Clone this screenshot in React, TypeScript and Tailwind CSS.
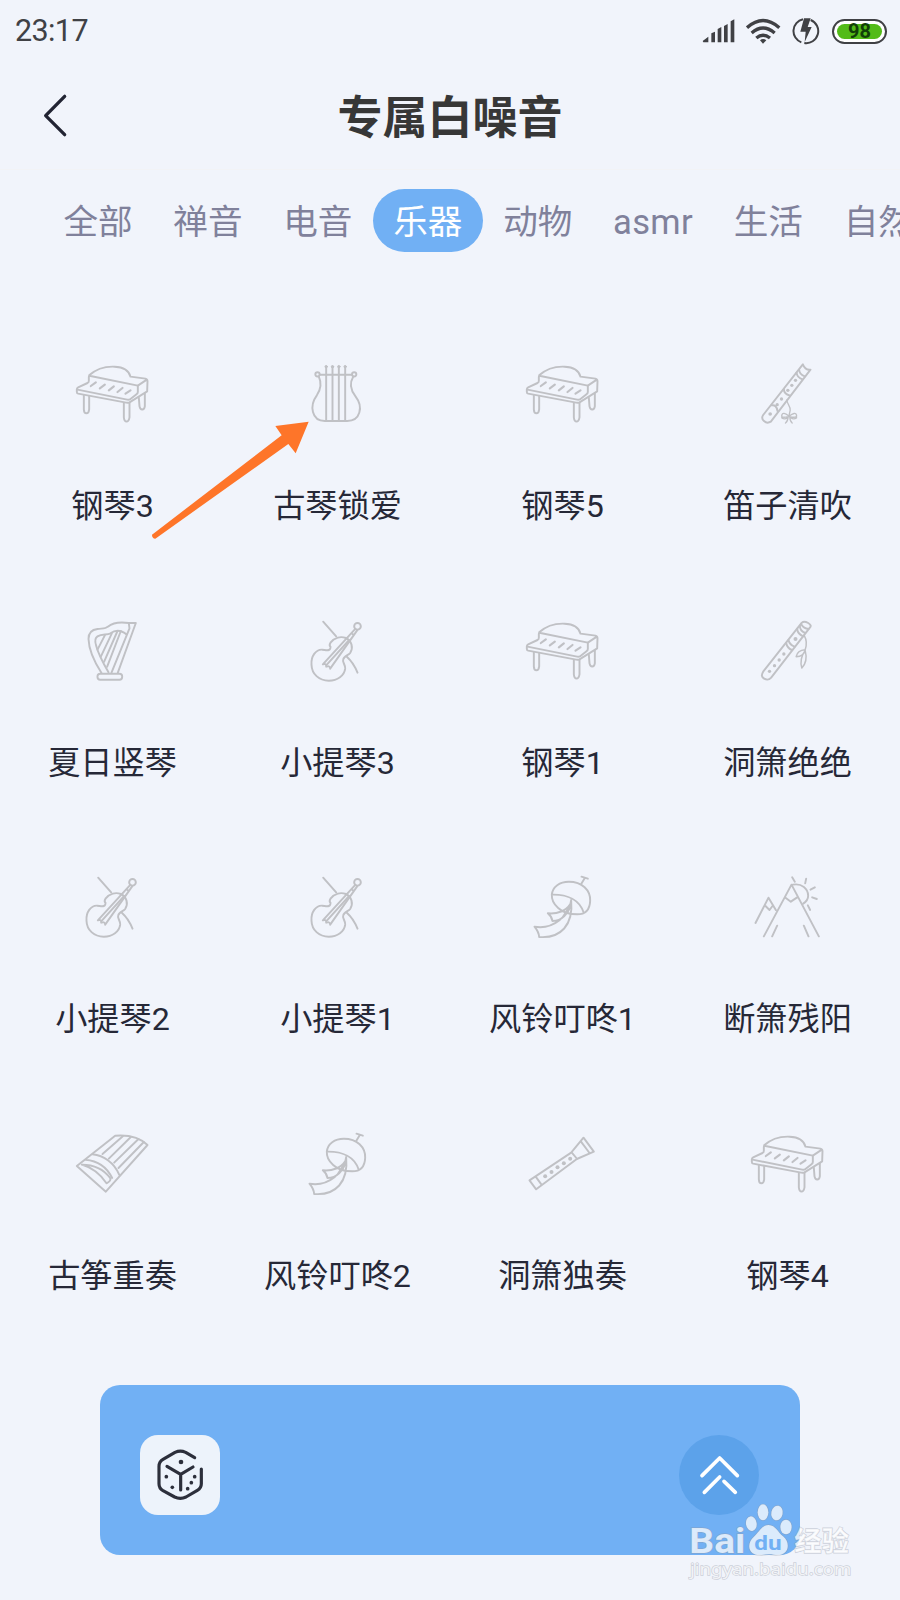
import type { ComponentType, ReactNode } from "react";

interface GlyphProps {
  viewBox: string;
  children: ReactNode;
}

function Glyph({ viewBox, children }: GlyphProps) {
  return (
    <svg
      viewBox={viewBox}
      className="mr-[2px] h-20 w-20 shrink-0 text-[#c0c1c5]"
      fill="none"
      stroke="currentColor"
      strokeWidth="5.8"
      strokeLinecap="round"
      strokeLinejoin="round"
    >
      {children}
    </svg>
  );
}

function PianoIcon() {
  return (
    <Glyph viewBox="67.5 42 240 240">
      <path d="M119 106C141 86 170 79 195 80C222 81 238 90 243 110L288 116Q294 117 294 124L293 154L240 187Q236 189 230 188L86 161Q82 160 82 156V148Q82 144 86 142L114 129Q118 127 118 122V111Q118 107 123 108L265 137L292 119" />
      <path d="M265 137V156Q265 160 261 163L243 177Q239 180 233 179L84 149" />
      <path strokeWidth="6.5" d="M139 127L124 138M166 134L151 145M193 139L178 151M219 144L204 156M243 151L228 161" />
      <path d="M103 166V208C104 224 117 224 119 208V169M223 189V232C225 249 237 249 240 232V188M268 173L270 199C273 213 284 211 286 199V160" />
    </Glyph>
  );
}

function LyreIcon() {
  return (
    <Glyph viewBox="742.5 42 240 240">
      <circle cx="804" cy="103" r="6.5" />
      <circle cx="914" cy="103" r="6.5" />
      <path d="M811 104H907M808 110C818 132 814 148 802 166C779 197 786 243 826 243H893C933 243 942 200 918 169C904 151 898 132 911 110M830 82V243M849 82V243M868 82V243M887 82V243" />
      <g fill="currentColor" strokeWidth="3">
        <circle cx="830" cy="80" r="3.5" />
        <circle cx="849" cy="80" r="3.5" />
        <circle cx="868" cy="80" r="3.5" />
        <circle cx="887" cy="80" r="3.5" />
      </g>
    </Glyph>
  );
}

function BambooFluteIcon() {
  return (
    <Glyph viewBox="742.5 42 240 240">
      <path d="M910 73L791 225C782 238 799 254 814 245L933 89Q917 91 910 73Z" />
      <path d="M899 90Q900 104 916 109M891 98Q893 113 909 118M853 147Q853 162 872 167M816 196Q831 193 834 213" />
      <g fill="currentColor" stroke="none">
        <circle cx="888" cy="121" r="5" />
        <circle cx="877" cy="136" r="5" />
        <circle cx="865" cy="151" r="5" />
        <circle cx="846" cy="177" r="5" />
        <circle cx="833" cy="194" r="5" />
        <circle cx="812" cy="222" r="5.5" />
      </g>
      <path strokeWidth="4" d="M862 180C863 194 873 197 872 211L869 225M868 228Q850 214 847 225T868 229Q888 214 891 225T868 229M866 230Q865 244 858 249M871 230Q871 243 878 249M847 225V234Q856 240 864 233M891 225V234Q882 240 874 233" />
    </Glyph>
  );
}

function HarpIcon() {
  return (
    <Glyph viewBox="97.5 32 240 240">
      <path d="M268 68C242 64 220 67 205 79C198 86 189 84 174 86C157 88 147 99 147 116C148 150 168 190 186 218M262 103C245 89 229 87 213 99C201 105 188 99 174 108C166 113 166 124 170 136C177 163 195 195 207 216M268 68H289L235 217M268 69L270 84L216 217" />
      <path d="M196 105L174 148M217 99L184 169M234 92L194 184M244 92L203 199" />
      <rect x="174" y="220" width="74" height="18" rx="8" />
    </Glyph>
  );
}

function ViolinIcon() {
  return (
    <Glyph viewBox="772.5 32 240 240">
      <circle cx="954" cy="78" r="10" />
      <path d="M851 64L890 108M922 169Q943 188 954 217" />
      <path d="M873 127C885 111 904 107 919 113C937 121 942 143 932 158C927 165 913 166 911 178C908 186 918 192 917 205C915 225 894 241 868 241C838 241 817 221 816 193C814 168 829 147 848 148C861 149 873 154 873 139Q868 135 873 127Z" />
      <path d="M946 87L850 192M953 90L872 205M850 192Q861 188 860 199Q872 195 872 205M936 99L943 104" />
      <path d="M929 119L862 193" />
    </Glyph>
  );
}

function XiaoIcon() {
  return (
    <Glyph viewBox="742.5 32 240 240">
      <path d="M907 67Q914 61 926 68T931 82L815 232Q806 242 794 235T791 214Z" />
      <path d="M901 76Q901 91 917 98M893 85Q894 101 911 108M867 119Q870 133 885 139M860 128Q863 143 877 149M905 72Q913 85 927 86" />
      <g fill="currentColor" stroke="none">
        <circle cx="888" cy="116" r="6" />
        <circle cx="853" cy="161" r="5" />
        <circle cx="839" cy="179" r="5" />
        <circle cx="825" cy="196" r="5" />
        <circle cx="810" cy="213" r="5" />
      </g>
      <path strokeWidth="4.5" d="M914 105C923 121 922 134 917 148M917 148C901 149 892 157 890 169C906 169 915 161 917 148ZM917 150C904 169 902 187 907 203C920 189 922 169 917 150Z" />
    </Glyph>
  );
}

function WindBellIcon() {
  return (
    <Glyph viewBox="67.5 22 240 240">
      <path d="M246 51L265 57M256 55L245 73" />
      <path d="M157 105C159 81 181 66 208 66C248 66 273 92 272 123C271 149 258 164 233 164C211 164 190 158 176 145C161 132 156 120 157 105ZM157 105C204 104 241 121 253 160" />
      <path d="M215 121C211 166 162 211 105 201Q118 217 119 232C184 237 222 196 215 121ZM213 132C200 153 174 164 145 161Q157 171 159 184C186 183 207 165 213 132M208 144L190 172M212 143L204 158" />
    </Glyph>
  );
}

function MountainIcon() {
  return (
    <Glyph viewBox="742.5 22 240 240">
      <path d="M793 230L876 75L958 230M768 190L807 114L829 151M798 139L810 151L819 139M858 114L874 126L892 114M833 198L818 230M913 198L927 230" />
      <path d="M880 75C907 70 926 87 926 108Q926 122 911 132M878 53L886 66M920 57L917 71M933 90L946 83M938 113L952 118M925 137L932 151" />
    </Glyph>
  );
}

function GuzhengIcon() {
  return (
    <Glyph viewBox="67.5 42 240 240">
      <path d="M82 168L197 77C236 74 272 83 294 105L169 245ZM129 133C163 137 194 158 209 194M108 149C145 152 172 171 188 204" />
      <path d="M97 164C135 164 165 181 182 204Q186 212 171 220C153 192 131 174 97 164ZM220 79L159 132M244 81L178 146M267 87L194 158M283 96L207 174" />
    </Glyph>
  );
}

function FluteIcon() {
  return (
    <Glyph viewBox="67.5 42 240 240">
      <path d="M90 211L215 128L252 83L283 125L232 147L110 238ZM108 199L126 224M217 128L233 147M244 94L270 129" />
      <g fill="currentColor" stroke="none">
        <circle cx="137" cy="199" r="6" />
        <circle cx="156" cy="186" r="6" />
        <circle cx="174" cy="172" r="6" />
        <circle cx="193" cy="160" r="6" />
        <circle cx="212" cy="146" r="6" />
      </g>
    </Glyph>
  );
}

interface Sound {
  name: string;
  Icon: ComponentType;
}

const sounds: Sound[] = [
  { name: "钢琴3", Icon: PianoIcon },
  { name: "古琴锁爱", Icon: LyreIcon },
  { name: "钢琴5", Icon: PianoIcon },
  { name: "笛子清吹", Icon: BambooFluteIcon },
  { name: "夏日竖琴", Icon: HarpIcon },
  { name: "小提琴3", Icon: ViolinIcon },
  { name: "钢琴1", Icon: PianoIcon },
  { name: "洞箫绝绝", Icon: XiaoIcon },
  { name: "小提琴2", Icon: ViolinIcon },
  { name: "小提琴1", Icon: ViolinIcon },
  { name: "风铃叮咚1", Icon: WindBellIcon },
  { name: "断箫残阳", Icon: MountainIcon },
  { name: "古筝重奏", Icon: GuzhengIcon },
  { name: "风铃叮咚2", Icon: WindBellIcon },
  { name: "洞箫独奏", Icon: FluteIcon },
  { name: "钢琴4", Icon: PianoIcon },
];

const tabs = ["全部", "禅音", "电音", "乐器", "动物", "asmr", "生活", "自然"];

function StatusBar() {
  return (
    <div className="flex h-[62px] items-center justify-between pr-[13px] pl-[15px] text-[#404145]">
      <span className="text-[30.5px] tracking-[-0.6px]">23:17</span>

      <div className="flex items-center">
        <svg viewBox="757 50 100 80" className="h-[26.67px] w-[33.33px]" fill="currentColor">
          <path d="M759 119L776 106V123H761ZM785 96L796 91V123H785ZM804 83L815 77V123H804ZM823 74L834 68V123H823ZM843 60L854 54V123H843Z" />
        </svg>
        <svg
          viewBox="890 50 104 80"
          className="ml-[11px] h-[26.67px] w-[34.67px]"
          fill="none"
          stroke="currentColor"
          strokeWidth="10"
        >
          <path d="M893 79Q941 36 990 79M907 95Q941 65 976 95M921 110Q941 93 962 110" />
          <path d="M932 117Q941 109 951 117L941 127Z" fill="currentColor" stroke="none" />
        </svg>
        <svg
          viewBox="1026 50 84 84"
          className="ml-[11px] h-7 w-7"
          fill="none"
          stroke="currentColor"
          strokeWidth="6"
        >
          <path d="M1059 57A36 36 0 0 0 1054 126M1082 59A36 36 0 0 1 1063 128" />
          <path d="M1062 54H1082L1073 80H1085L1064 125L1067 94H1051Z" fill="currentColor" stroke="none" />
        </svg>
        <div className="ml-3 flex h-[25px] w-[55px] items-center rounded-full border-2 border-[#404145] bg-white p-[3px]">
          <div className="flex h-[15px] w-full items-center justify-center rounded-full bg-[#53bb18] text-[20px] leading-none font-bold text-[#123f08]">
            98
          </div>
        </div>
      </div>
    </div>
  );
}

function Header() {
  return (
    <header className="grid h-[108px] grid-cols-[1fr_auto_1fr] items-center border-b border-[#f2f3f6]">
      <svg
        viewBox="126 276 80 138"
        className="ml-[42px] h-[46px] w-[26.67px]"
        fill="none"
        stroke="#222433"
        strokeWidth="10"
        strokeLinecap="round"
        strokeLinejoin="round"
      >
        <path d="M194 286L137 344L194 401" />
      </svg>
      <h1 className="pt-[7px] text-[45px] leading-[60px] font-bold text-[#373737]">专属白噪音</h1>
    </header>
  );
}

function Tabs() {
  return (
    <nav className="mt-[19px] flex h-[63px] overflow-hidden pl-[43px]">
      {tabs.map((tab) => (
        <button
          key={tab}
          className={
            tab === "乐器"
              ? "h-[63px] shrink-0 rounded-full bg-[#71b0f4] px-[20.4px] pt-[5px] text-[34.6px] whitespace-nowrap text-white"
              : "h-[63px] shrink-0 px-[20.4px] pt-[5px] text-[34.6px] whitespace-nowrap text-[#80819b]"
          }
        >
          {tab === "asmr" ? <span className="tracking-[0.3px]">{tab}</span> : tab}
        </button>
      ))}
    </nav>
  );
}

function PlayerBar() {
  return (
    <div className="mx-[100px] mt-[4px] flex h-[170px] items-start justify-between rounded-[20px] bg-[#71b0f4] pt-[50px] pr-[41px] pl-10">
      <div className="h-20 w-20 rounded-[18px] bg-[#edf3fb]">
        <svg
          viewBox="150 195 240 240"
          className="h-20 w-20"
          fill="none"
          stroke="#2c2f3b"
          strokeWidth="9.5"
          strokeLinecap="round"
          strokeLinejoin="round"
        >
          <path d="M314 263L287 247Q271 240 255 247L219 268Q207 275 207 289V341Q207 355 219 362L254 381Q271 389 288 381L322 361Q334 354 334 341V297M231 289L272 313L309 291M272 313V360" />
          <g fill="#2c2f3b" stroke="none">
            <circle cx="273" cy="276" r="7" />
            <circle cx="229" cy="320" r="5.5" />
            <circle cx="247" cy="352" r="5.5" />
            <circle cx="314" cy="320" r="5.5" />
            <circle cx="304" cy="338" r="5.5" />
            <circle cx="293" cy="356" r="5.5" />
          </g>
        </svg>
      </div>

      <div className="h-20 w-20 rounded-full bg-[#5ca2ea]">
        <svg
          viewBox="117 105 240 240"
          className="h-20 w-20"
          fill="none"
          stroke="white"
          strokeWidth="11"
          strokeLinecap="round"
          strokeLinejoin="round"
        >
          <path d="M186 227L239 174L292 227M193 277L239 231M252 244L286 277" />
        </svg>
      </div>
    </div>
  );
}

function Watermark() {
  return (
    <svg
      viewBox="0 0 780 600"
      className="pointer-events-none absolute top-[1400px] left-[640px] h-[200px] w-[260px]"
      fill="#ffffff"
      fillOpacity="0.75"
      stroke="#8f96a5"
      strokeOpacity="0.4"
      strokeWidth="4"
      paintOrder="stroke"
    >
      <ellipse cx="334" cy="371" rx="16" ry="22" transform="rotate(-8 334 371)" />
      <ellipse cx="369" cy="337" rx="16" ry="24" />
      <ellipse cx="411" cy="339" rx="17" ry="22" transform="rotate(12 411 339)" />
      <ellipse cx="438" cy="381" rx="17" ry="22" />
      <path d="M386 375C407 376 414 397 429 409C446 422 449 448 432 460C418 470 403 463 387 463C370 463 352 470 338 460C322 448 326 424 341 411C358 397 363 376 386 375Z" />
      <text x="148" y="460" fontSize="104" fontWeight="700" textLength="168" lengthAdjust="spacingAndGlyphs">
        Bai
      </text>
      <text
        x="343"
        y="449"
        fontSize="62"
        fontWeight="700"
        fill="#71b0f4"
        fillOpacity="1"
        stroke="none"
        textLength="82"
        lengthAdjust="spacingAndGlyphs"
      >
        du
      </text>
      <text x="463" y="453" fontSize="83" fontWeight="700" textLength="164" lengthAdjust="spacingAndGlyphs">
        经验
      </text>
      <text
        x="150"
        y="525"
        fontSize="50"
        fontFamily="'Noto Sans', sans-serif"
        textLength="484"
        lengthAdjust="spacingAndGlyphs"
      >
        jingyan.baidu.com
      </text>
    </svg>
  );
}

function App() {
  return (
    <div className="relative h-[1600px] w-[900px] overflow-hidden bg-[#f1f4fb] font-[Roboto,'Noto_Sans_CJK_SC',sans-serif]">
      <StatusBar />
      <Header />
      <Tabs />

      {/* Sound grid */}
      <div className="mt-[102px] grid grid-cols-4">
        {sounds.map(({ name, Icon }) => (
          <div key={name} className="flex h-[256.67px] flex-col items-center">
            <Icon />
            <span className="mt-[52px] text-[32.2px] leading-10 whitespace-nowrap text-[#262837]">
              {name}
            </span>
          </div>
        ))}
      </div>

      <PlayerBar />

      {/* Pointer to the selected sound */}
      <svg
        viewBox="0 0 480 360"
        className="pointer-events-none absolute top-[420px] left-[150px] h-[120px] w-[160px]"
        fill="#fe7529"
      >
        <path d="M476 5L376 18L395 46L6 344Q6 355 16 356L415 72L437 100Z" />
      </svg>

      <Watermark />
    </div>
  );
}

export default App;
